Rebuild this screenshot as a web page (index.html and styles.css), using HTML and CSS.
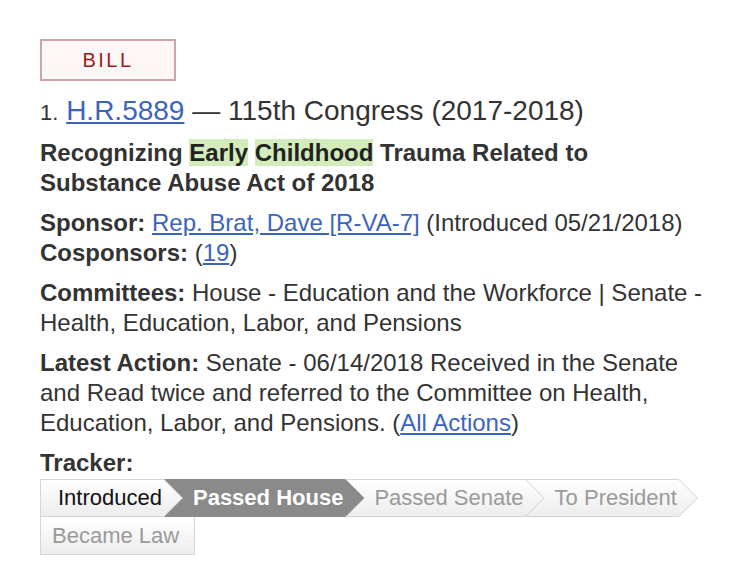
FILE: index.html
```html
<!DOCTYPE html>
<html lang="en">
<head>
    <meta charset="UTF-8">
    <meta name="viewport" content="width=device-width, initial-scale=1.0">
    <title>H.R.5889 - 115th Congress</title>
    <link rel="stylesheet" href="styles.css">
</head>
<body>
    <div class="result">
        <span class="type-badge">BILL</span>

        <p class="heading">
            <span class="num">1.</span>
            <a href="#">H.R.5889</a> &mdash; 115th Congress (2017-2018)
        </p>
        <p class="title">
            Recognizing <mark>Early</mark> <mark>Childhood</mark> Trauma Related to
            Substance Abuse Act of 2018
        </p>

        <p class="item">
            <strong>Sponsor:</strong> <a href="#">Rep. Brat, Dave [R-VA-7]</a> (Introduced 05/21/2018)<br>
            <strong>Cosponsors:</strong> (<a href="#">19</a>)
        </p>
        <p class="item">
            <strong>Committees:</strong> House - Education and the Workforce | Senate - Health, Education, Labor, and Pensions
        </p>
        <p class="item">
            <strong>Latest Action:</strong> Senate - 06/14/2018 Received in the Senate and Read twice and referred to the Committee on Health, Education, Labor, and Pensions. (<a href="#">All Actions</a>)
        </p>

        <p class="item tracker-label"><strong>Tracker:</strong></p>
        <ol class="tracker">
            <li class="step first done">Introduced</li>
            <li class="step current">Passed House</li>
            <li class="step">Passed Senate</li>
            <li class="step">To President</li>
            <li class="step last">Became Law</li>
        </ol>
    </div>
</body>
</html>
```

FILE: styles.css
```css
body {
    margin: 0;
    padding: 39px 0 0 40px;
    font-family: "Liberation Sans", Arial, sans-serif;
    color: #333;
    background-color: #fff;
}
.result {
    width: 670px;
}
a {
    color: #3d64bd; /* link blue */
}
p {
    margin: 0;
}

/* red outlined type label */
.type-badge {
    display: block;
    box-sizing: border-box;
    width: 136px;
    height: 42px;
    line-height: 38px;
    text-align: center;
    border: 2px solid #cfa5a8;
    background-color: #fdf6f6;
    color: #9a1b1b;
    font-size: 20px;
    letter-spacing: 2.5px;
}

.heading {
    margin-top: 15px;
    font-size: 28px;
    line-height: 30px;
}
.heading .num {
    font-size: 22px;
}
.title {
    margin-top: 10px;
    font-size: 24px;
    font-weight: bold;
    line-height: 30px;
}
mark {
    background-color: #d3ecbc; /* search hit highlight */
    color: #222;
}
.item {
    margin-top: 10px;
    font-size: 24px;
    line-height: 30px;
}

/* status tracker */
.tracker {
    list-style: none;
    margin: 1px 0 0;
    padding: 0;
    display: flex;
    flex-wrap: wrap;
    width: 654px;
    font-size: 22px;
}
.step {
    position: relative;
    height: 36px;
    line-height: 36px;
    padding: 0 2px 0 29px;
    border-top: 1px solid #d6d6d6;
    border-bottom: 1px solid #d6d6d6;
    background: linear-gradient(#fff, #ededed);
    color: #9a9a9a;
}
.step.first {
    padding-left: 17px;
    border-left: 1px solid #d6d6d6;
}
.step.done {
    color: #111;
}
.step.current {
    background: #8a8a8a;
    border-color: #8a8a8a;
    color: #fff;
    font-weight: bold;
}
.step::before,
.step::after {
    content: "";
    position: absolute;
    top: -1px;
    left: 100%;
    width: 19px;
    height: 38px;
    clip-path: polygon(0 0, 100% 50%, 0 100%);
    z-index: 1;
}
.step::before {
    background: #d0d0d0;
}
.step::after {
    left: calc(100% - 1px);
    background: linear-gradient(#fff, #ededed);
}
.step.current::before,
.step.current::after {
    background: #8a8a8a;
}
.step.last {
    height: 37px;
    line-height: 37px;
    padding: 0 15px 0 11px;
    border: 1px solid #d6d6d6;
    border-top: 0;
}
.step.last::before,
.step.last::after {
    display: none;
}
```
